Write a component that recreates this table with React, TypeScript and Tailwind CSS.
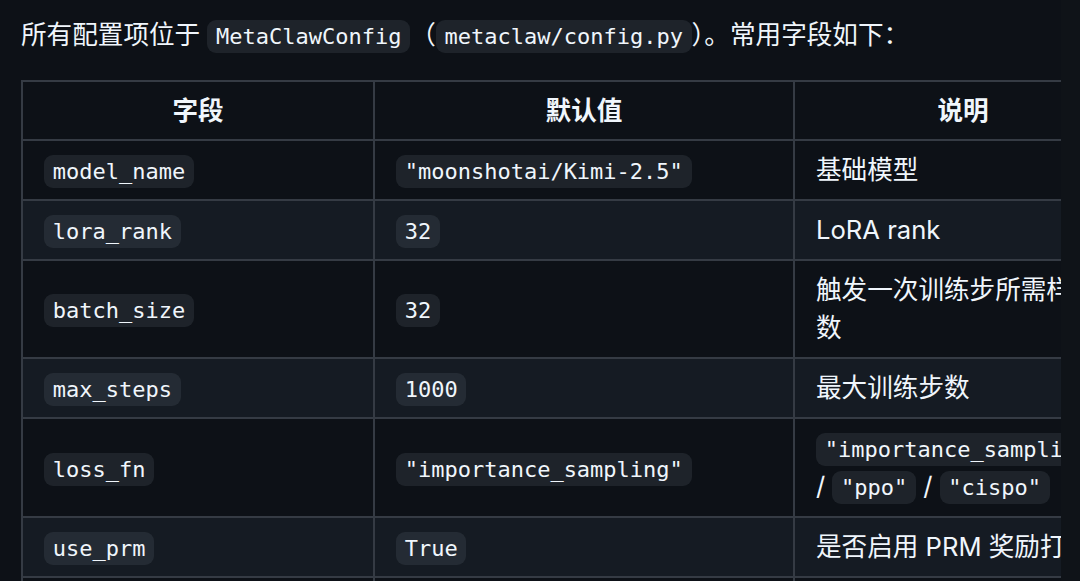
import React from "react";

const Code = ({ children }: { children: React.ReactNode }) => (
  <code className="rounded-[9px] bg-[#656c7633] px-[8.7px] py-[4px] font-['DejaVu_Sans_Mono',monospace] text-[22px] leading-none whitespace-nowrap">
    {children}
  </code>
);

type Row = { field: string; def: string; desc: React.ReactNode; tall?: boolean };

const rows: Row[] = [
  { field: "model_name", def: '"moonshotai/Kimi-2.5"', desc: "基础模型" },
  { field: "lora_rank", def: "32", desc: "LoRA rank" },
  {
    field: "batch_size",
    def: "32",
    desc: (
      <>
        触发一次训练步所需样本
        <br />数
      </>
    ),
  },
  { field: "max_steps", def: "1000", desc: "最大训练步数" },
  {
    field: "loss_fn",
    def: '"importance_sampling"',
    tall: true,
    desc: (
      <>
        <Code>"importance_sampling"</Code>
        <br />/ <Code>"ppo"</Code> / <Code>"cispo"</Code>
      </>
    ),
  },
  { field: "use_prm", def: "True", desc: "是否启用 PRM 奖励打分" },
  { field: "prm_url", def: '"http://localhost:8000"', desc: "PRM 服务地址" },
];

export default function App() {
  return (
    <div className="flex h-[581px] w-[1080px] overflow-hidden bg-[#0d1117] font-['Inter','Noto_Sans_CJK_SC',sans-serif] text-[25.6px] text-[#f0f6fc]">
      <div className="w-[1061px] shrink-0 pl-[21px]">
        <p className="h-[54px] pt-[16px] leading-[38px] whitespace-nowrap">
          所有配置项位于 <Code>MetaClawConfig</Code>（<Code>metaclaw/config.py</Code>）。常用字段如下：
        </p>
        <div className="mt-[26px] overflow-hidden">
          <table className="w-[1112px] table-fixed border-separate border-spacing-0 leading-[38px]">
            <thead>
              <tr>
                <th className="h-[61px] w-[354px] border-2 border-[#353b44] px-[21px] py-0 text-center font-semibold">
                  字段
                </th>
                <th className="h-[61px] w-[420px] border-y-2 border-r-2 border-[#353b44] px-[21px] py-0 text-center font-semibold">
                  默认值
                </th>
                <th className="h-[61px] w-[338px] border-y-2 border-r-2 border-[#353b44] px-[21px] py-0 text-center font-semibold">
                  说明
                </th>
              </tr>
            </thead>
            <tbody>
              {rows.map((r, i) => (
                <tr key={r.field} className={i % 2 === 1 ? "bg-[#151b23]" : "bg-[#0d1117]"}>
                  <td className="border-x-2 border-b-2 border-[#353b44] px-[21px] py-[10px] align-middle">
                    <Code>{r.field}</Code>
                  </td>
                  <td className="border-r-2 border-b-2 border-[#353b44] px-[21px] py-[10px] align-middle">
                    <Code>{r.def}</Code>
                  </td>
                  <td
                    className={
                      r.tall
                        ? "border-r-2 border-b-2 border-[#353b44] px-[21px] pt-[10px] pb-[11px] align-middle whitespace-nowrap"
                        : "border-r-2 border-b-2 border-[#353b44] px-[21px] py-[10px] align-middle whitespace-nowrap"
                    }
                  >
                    {r.desc}
                  </td>
                </tr>
              ))}
            </tbody>
          </table>
        </div>
      </div>
      <div className="flex-1 bg-[#0f1318]" />
    </div>
  );
}
